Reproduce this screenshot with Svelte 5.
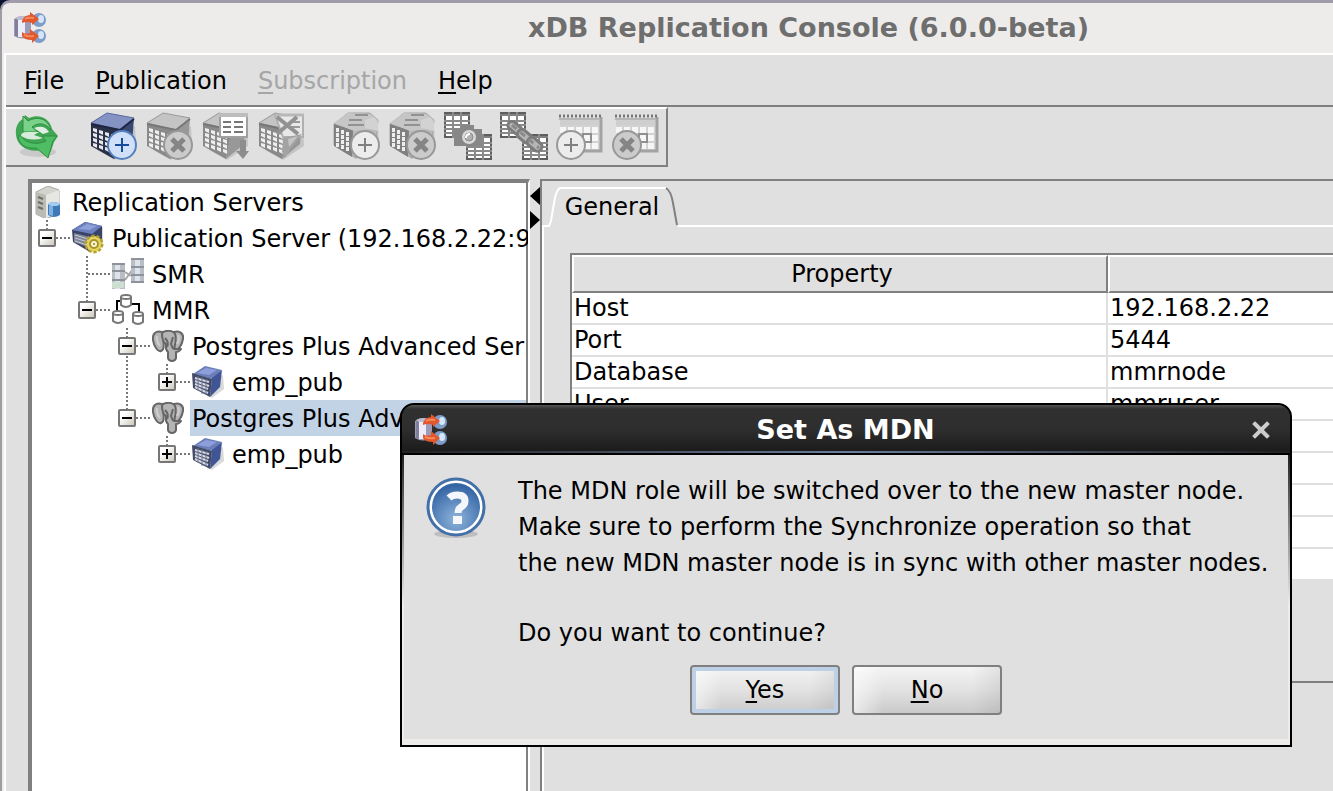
<script>
  const menus = [
    { key: 'F', rest: 'ile', off: false },
    { key: 'P', rest: 'ublication', off: false },
    { key: 'S', rest: 'ubscription', off: true },
    { key: 'H', rest: 'elp', off: false }
  ];

  const tree = [
    { label: 'Replication Servers', icon: 'root', cells: [] },
    { label: 'Publication Server (192.168.2.22:9', icon: 'pub', cells: ['minus-last'] },
    { label: 'SMR', icon: 'smr', cells: ['none', 'branch'] },
    { label: 'MMR', icon: 'mmr', cells: ['none', 'minus-last'] },
    { label: 'Postgres Plus Advanced Ser', icon: 'pg', cells: ['none', 'none', 'minus'] },
    { label: 'emp_pub', icon: 'table', cells: ['none', 'none', 'line', 'plus-last'] },
    { label: 'Postgres Plus Advanced Ser', icon: 'pg', cells: ['none', 'none', 'minus-last'], selected: true },
    { label: 'emp_pub', icon: 'table', cells: ['none', 'none', 'none', 'plus-last'] }
  ];

  const rows = [
    ['Host', '192.168.2.22'],
    ['Port', '5444'],
    ['Database', 'mmrnode'],
    ['User', 'mmruser'],
    ['', ''], ['', ''], ['', ''], ['', ''], ['', '']
  ];

  const tools = [
    [['refresh', 'Refresh', false]],
    [
      ['pubAdd', 'Add publication', false],
      ['pubRemove', 'Remove publication', true],
      ['pubTables', 'Add tables', true],
      ['pubFilter', 'Filter rules', true]
    ],
    [
      ['subAdd', 'Add subscription', true],
      ['subRemove', 'Remove subscription', true],
      ['snapshot', 'Snapshot', true],
      ['sync', 'Synchronize', true],
      ['calAdd', 'Configure schedule', true],
      ['calRemove', 'Remove schedule', true]
    ]
  ];
</script>

{#snippet appIcon()}
  <svg width="32" height="32" viewBox="0 0 32 32" aria-hidden="true">
    <path d="M0 7Q8 1 17 7V24Q8 29 0 24Z" fill="#9c9cb8" />
    <path d="M1 7H4V25L1 24Z" fill="#7f7f99" />
    <path d="M4 8H11V25H4Z" fill="#ececfa" />
    <path d="M1 6Q8 2 16 6L12 8H4Z" fill="#bcbcd0" />
    <circle cx="25" cy="8" r="7" fill="#7d9cc8" />
    <ellipse cx="27" cy="7" rx="3" ry="4" fill="#d4e6f8" />
    <circle cx="25" cy="24" r="7" fill="#7d9cc8" />
    <ellipse cx="27" cy="23" rx="3" ry="4" fill="#d4e6f8" />
    <path d="M8 9Q10 3 16 3V0L25 7L18 13V11Q12 9 8 11Z" fill="#e2582c" />
    <path d="M11 7Q14 5 20 6" fill="none" stroke="#f58a5c" stroke-width="2" />
    <path d="M8 20Q11 23 16 21V17L25 24L18 31V28Q10 28 8 24Z" fill="#e2582c" />
    <path d="M10 23Q14 25 20 24" fill="none" stroke="#f58a5c" stroke-width="2" />
  </svg>
{/snippet}

{#snippet box(blue)}
  <polygon points="8,38 26,48 47,34 46,14" fill="#000" opacity="0.12" />
  <polygon points="31,17 45,6 43,32 25,47" fill={blue ? '#3a4874' : '#989898'} />
  <polygon points="2,11 31,17 25,47 2,34" fill={blue ? '#2a3048' : '#8a8a8a'} />
  <g fill={blue ? '#e6e8ee' : '#eeeeee'}>
    {#each [0, 1, 2, 3] as r}
      {#each [0, 1, 2, 3] as c}
        <polygon points="{4 + c * 6},{16 + r * 5 + c * 2} {8 + c * 6},{17 + r * 5 + c * 2} {8 + c * 6},{21 + r * 5 + c * 2} {4 + c * 6},{19 + r * 5 + c * 2}" />
      {/each}
    {/each}
  </g>
  <polygon points="2,11 18,1 45,6 31,18" fill={blue ? '#8592c4' : '#c4c4c4'} stroke={blue ? '#59679c' : '#9a9a9a'} />
  <path d="M2 12L31 18L45 7" fill="none" stroke={blue ? '#1f2540' : '#777'} stroke-width="2" />
{/snippet}

{#snippet subBox()}
  <polygon points="8,38 24,47 47,34 46,14" fill="#000" opacity="0.12" />
  <polygon points="2,12 16,1 38,1 46,8 44,30 24,46 2,33" fill="#b9b9b9" stroke="#a5a5a5" />
  <polygon points="2,12 21,18 20,45 2,34" fill="#808080" />
  <g fill="#eee">
    {#each [0, 1, 2, 3] as r}
      {#each [0, 1, 2] as c}
        <rect x={4 + c * 5} y={16 + r * 5 + c * 2} width="3" height="4" />
      {/each}
    {/each}
  </g>
  <path d="M2 11L16 1L38 2L46 8L40 17L22 19Z" fill="#c6c6c6" />
  <path d="M17 8H30M16 13H32M23 3H36" stroke="#929292" stroke-width="2" />
  <path d="M33 16V8L42 5L46 10V19Z" fill="#d2d2d2" />
{/snippet}

{#snippet badge(x, kind, blue)}
  <circle cx={x} cy="33" r="14" fill={blue ? '#cfe0f8' : kind === 'x' ? '#cbcbcb' : '#ececec'} stroke={blue ? '#5580c0' : '#989898'} stroke-width="2" />
  {#if kind === 'x'}
    <path d="M{x - 6} 27L{x + 6} 39M{x + 6} 27L{x - 6} 39" stroke="#858585" stroke-width="5" />
  {:else}
    <path d="M{x - 7} 33H{x + 7}M{x} 26V40" stroke={blue ? '#164a9c' : '#808080'} stroke-width="2" />
  {/if}
{/snippet}

{#snippet sheet(x, y)}
  <rect x={x + 1} y={y + 1} width="24" height="24" fill="#fff" stroke="#5e5e5e" stroke-width="2" />
  <path d="M{x} {y + 3}H{x + 26}" stroke="#808080" stroke-width="2" />
  <path d="M{x} {y + 9}H{x + 26}M{x} {y + 13}H{x + 26}M{x} {y + 17}H{x + 26}M{x} {y + 21}H{x + 26}M{x + 9} {y}V{y + 26}M{x + 17} {y}V{y + 26}" stroke="#8a8a8a" stroke-width="2" />
{/snippet}

{#snippet calendar()}
  <rect x="4" y="6" width="41" height="34" fill="#d2d2d2" />
  <path d="M45 5V39H6" fill="none" stroke="#a3a3a3" stroke-width="3" />
  <path d="M3 4H46" stroke="#777" stroke-width="3" stroke-dasharray="2 2" />
  <path d="M3 7H44" stroke="#b5b5b5" stroke-width="2" />
  <rect x="4" y="8" width="39" height="5" fill="#cfcfcf" />
  <g fill="#f6f6f6">
    {#each [0, 1, 2] as r}
      {#each [0, 1, 2, 3, 4] as c}
        <rect x={4 + c * 8} y={15 + r * 8} width="6" height="6" />
      {/each}
    {/each}
  </g>
  <rect x="27" y="22" width="8" height="8" fill="none" stroke="#8f8f8f" stroke-width="2" />
{/snippet}

{#snippet toolIcon(name)}
  <svg width="48" height="48" viewBox="0 0 48 48" aria-hidden="true">
    {#if name === 'refresh'}
      <ellipse cx="24" cy="40" rx="18" ry="5" fill="#000" opacity="0.1" />
      <path d="M2 23C1 14 5 9 9 7L11 3L15 6C26 1 36 7 38 17L44 24L40 30L38 36L34 46L28 38C14 41 3 34 2 23Z" fill="#41a653" />
      <path d="M9 4V20H24L18 15C24 10 32 11 37 18C34 6 23 4 14 9Z" fill="#7ad18a" stroke="#2f8f42" />
      <path d="M4 24C5 33 12 37 22 36L27 40L34 46L39 29L43 24H28L32 29C24 33 12 32 7 24Z" fill="#4fbd63" stroke="#2f8f42" />
      <path d="M7 24Q7 20 13 20H25L20 23L29 26Q17 30 7 24Z" fill="#d9ecdb" />
      <path d="M20 16Q30 12 35 20L29 22Z" fill="#e1efe2" />
    {:else if name === 'pubAdd'}
      {@render box(true)}{@render badge(33, '+', true)}
    {:else if name === 'pubRemove'}
      {@render box(false)}{@render badge(33, 'x', false)}
    {:else if name === 'pubTables'}
      {@render box(false)}
      <path d="M19 3H46V25H19Z" fill="#fff" stroke="#a0a0a0" stroke-width="2" />
      <path d="M18 3H47" stroke="#bdbdbd" stroke-width="4" />
      <path d="M22 10H30M33 10H42M22 15H30M33 15H42M22 20H30M33 20H42" stroke="#777" stroke-width="2" />
      <path d="M39 28H45V39H48L42 47L35 39H39Z" fill="#8d8d8d" />
    {:else if name === 'pubFilter'}
      {@render box(false)}
      <path d="M18 3H46V25H26Z" fill="#e8e8e8" stroke="#b0b0b0" stroke-width="2" />
      <path d="M18 3H47" stroke="#b8b8b8" stroke-width="3" />
      <path d="M34 10H43M34 15H43" stroke="#999" stroke-width="2" />
      <path d="M20 5L41 22M40 5L20 22" stroke="#929292" stroke-width="4" />
      <path d="M26 26L45 22L34 36L28 46L25 40Z" fill="#a3a3a3" />
      <path d="M31 27L41 24L32 35Z" fill="#c4c4c4" />
    {:else if name === 'subAdd'}
      {@render subBox()}{@render badge(33, '+', false)}
    {:else if name === 'subRemove'}
      {@render subBox()}{@render badge(33, 'x', false)}
    {:else if name === 'snapshot'}
      {@render sheet(0, 0)}{@render sheet(22, 22)}
      <path d="M10 17H17V13H30V17H38V34H10Z" fill="#878787" />
      <circle cx="25" cy="25" r="7" fill="#d9d9d9" />
      <circle cx="25" cy="25" r="4" fill="#b0b0b0" stroke="#8a8a8a" />
      <path d="M22 26Q22 22 26 22" fill="none" stroke="#fff" stroke-width="2" />
    {:else if name === 'sync'}
      {@render sheet(0, 0)}{@render sheet(22, 22)}
      <g fill="#b5b5b5" stroke="#7c7c7c" stroke-width="3">
        <rect x="7" y="12" width="16" height="8" rx="4" transform="rotate(40 15 16)" />
        <rect x="17" y="20" width="16" height="9" rx="4" transform="rotate(40 25 24)" />
        <rect x="27" y="28" width="16" height="9" rx="4" transform="rotate(40 35 32)" />
      </g>
      <path d="M12 13L39 36" stroke="#8a8a8a" stroke-width="3" stroke-dasharray="6 5" />
    {:else if name === 'calAdd'}
      {@render calendar()}{@render badge(15, '+', false)}
    {:else}
      {@render calendar()}{@render badge(15, 'x', false)}
    {/if}
  </svg>
{/snippet}

{#snippet treeIcon(name)}
  <svg width="32" height="32" viewBox="0 0 32 32" aria-hidden="true">
    {#if name === 'root'}
      <path d="M4 6L16 0L27 4V27L14 33L4 28Z" fill="#d2d4ce" stroke="#a4a69f" />
      <path d="M4 6L14 9V32L4 28Z" fill="#b9bbb4" />
      <path d="M14 9L27 4V27L14 32Z" fill="#e6e7e3" />
      <path d="M6 11L11 13M6 16L11 18M6 21L11 23" stroke="#6c6e69" stroke-width="2" />
      <path d="M16 18Q22 14 28 18V29Q22 33 16 29Z" fill="#3f79b8" />
      <path d="M17 20H21V30L17 29Z" fill="#7fb0e2" />
      <ellipse cx="22" cy="18" rx="6" ry="2" fill="#a5cbef" />
    {:else if name === 'pub'}
      <path d="M20 12L31 5V25L18 31Z" fill="#000" opacity="0.15" />
      <path d="M0 8L13 0L30 4V22L18 30L1 20Z" fill="#3a4468" />
      <path d="M0 8L14 0L30 4L20 12Z" fill="#6d80c0" />
      <path d="M6 7L15 2L25 4L18 8Z" fill="#8ea0d8" />
      <path d="M2 11L18 15V26L2 20Z" fill="#7f8596" />
      <path d="M3 13L16 17M3 16L16 20M3 19L15 23" stroke="#c9ccd6" />
      <circle cx="22" cy="22" r="8" fill="#e5d254" stroke="#b5a02c" stroke-width="3" stroke-dasharray="3 2" />
      <circle cx="22" cy="22" r="7" fill="#e6d462" />
      <circle cx="22" cy="22" r="4" fill="#faf4cf" stroke="#a8952c" stroke-width="2" />
      <circle cx="22" cy="22" r="1" fill="#92821f" />
    {:else if name === 'smr'}
      <path d="M13 22L21 11M13 14L19 18" stroke="#a5a5a5" stroke-width="2" />
      <rect x="0" y="5" width="13" height="26" fill="#b9bec6" />
      <rect x="19" y="0" width="13" height="25" fill="#b9bec6" />
      <path d="M3 5H8V31H3ZM23 0H28V25H23Z" fill="#dfe4ea" />
      <path d="M0 6H13M0 13H13M0 22H13M19 1H32M19 9H32M19 17H32M19 24H32" stroke="#8d929b" stroke-width="2" />
      <path d="M0 24H12V30H0Z" fill="#cddfd2" />
    {:else if name === 'mmr'}
      <path d="M5 17V7H9M19 10H27V18" fill="none" stroke="#000" stroke-width="2" />
      <g fill="#fff" stroke="#777" stroke-width="2">
        <path d="M9 3V11Q14 15 19 11V3" /><ellipse cx="14" cy="3" rx="5" ry="2" />
        <path d="M1 19V27Q6 31 11 27V19" /><ellipse cx="6" cy="19" rx="5" ry="2" />
        <path d="M21 20V28Q26 32 31 28V20" /><ellipse cx="26" cy="20" rx="5" ry="2" />
      </g>
    {:else if name === 'pg'}
      <g fill="#b4b4b4" stroke="#666" stroke-width="2" stroke-linejoin="round">
        <path d="M10 2C4 0 0 4 1 10C2 17 6 22 9 21C12 20 12 14 11 9Z" />
        <path d="M22 2C28 0 32 4 31 9C30 15 26 21 23 20L20 9Z" />
        <path d="M10 3C13 0 21 0 23 4C25 9 23 14 22 19H29Q27 22 24 22V28C23 32 17 32 16 28V22C13 20 14 16 14 14C10 12 10 7 10 3Z" />
      </g>
      <path d="M13 8C15 10 17 13 15 17M21 7L19 14L21 19" fill="none" stroke="#666" stroke-width="2" />
      <path d="M5 6Q4 11 8 16M26 5Q28 9 25 14" fill="none" stroke="#cfcfcf" stroke-width="2" />
    {:else}
      <path d="M7 24L20 32L32 23L31 9Z" fill="#000" opacity="0.15" />
      <path d="M1 8L13 0L30 4L20 13Z" fill="#6b7fbd" />
      <path d="M5 7L14 2L25 4L17 9Z" fill="#8d9fd8" />
      <path d="M20 12L30 4L28 21L18 31Z" fill="#3f5596" />
      <path d="M0 7L20 13L18 31L1 22Z" fill="#434a66" />
      <path d="M3 12L17 16M3 15L17 20M3 18L16 23M3 21L16 27" stroke="#d7dae6" stroke-width="2" />
      <path d="M6 10V25M10 11V28M14 13V29" stroke="#6c738c" />
    {/if}
  </svg>
{/snippet}

{#snippet guides(kind)}
  <svg width="40" height="36" viewBox="0 0 40 36" aria-hidden="true">
    <g stroke="#777" stroke-width="2" stroke-dasharray="2 2">
      {#if kind !== 'none'}
        <path d="M15 0V{kind.endsWith('last') ? 18 : 36}" />
      {/if}
      {#if kind !== 'none' && kind !== 'line'}
        <path d="M16 18H38" />
      {/if}
    </g>
    {#if kind.startsWith('minus') || kind.startsWith('plus')}
      <rect x="7" y="10" width="16" height="16" rx="1" fill="url(#handle)" stroke="#777" stroke-width="2" />
      <path d="M10 18H20" stroke="#000" stroke-width="2" />
      {#if kind.startsWith('plus')}
        <path d="M15 13V23" stroke="#000" stroke-width="2" />
      {/if}
    {/if}
  </svg>
{/snippet}

<svg class="defs" aria-hidden="true">
  <linearGradient id="handle" x1="0" y1="0" x2="1" y2="1">
    <stop offset="0.3" stop-color="#fff" />
    <stop offset="1" stop-color="#c9c4b6" />
  </linearGradient>
</svg>

<div class="desktop">
  <main class="window">
    <header class="titlebar">
      {@render appIcon()}
      <h1>xDB Replication Console (6.0.0-beta)</h1>
    </header>

    <div class="client">
      <nav class="menubar">
        {#each menus as m}
          <button disabled={m.off}><u>{m.key}</u>{m.rest}</button>
        {/each}
      </nav>

      <div class="toolbar">
        {#each tools as group}
          <div class="group">
            {#each group as [name, label, off]}
              <button aria-label={label} disabled={off}>{@render toolIcon(name)}</button>
            {/each}
          </div>
        {/each}
      </div>

      <div class="split">
        <ul class="tree">
          {#each tree as node}
            <li>
              {#each node.cells as kind}
                {#if kind.startsWith('minus') || kind.startsWith('plus')}
                  <button class="cell" aria-label={kind.startsWith('minus') ? 'Collapse' : 'Expand'}>{@render guides(kind)}</button>
                {:else}
                  <span class="cell">{@render guides(kind)}</span>
                {/if}
              {/each}
              {@render treeIcon(node.icon)}
              <span class="label" class:selected={node.selected}>{node.label}</span>
            </li>
          {/each}
        </ul>

        <div class="divider">
          <button aria-label="Collapse left pane"><svg width="10" height="18" viewBox="0 0 10 18"><path d="M10 0V18L0 9Z" /></svg></button>
          <button aria-label="Expand left pane"><svg width="10" height="18" viewBox="0 0 10 18"><path d="M0 0V18L10 9Z" /></svg></button>
        </div>

        <section class="details">
          <div class="tabs">
            <button class="tab">
              <svg width="138" height="40" viewBox="0 0 138 40" aria-hidden="true">
                <path d="M0 39H7L9 34L12 16Q14 3 18 1H124" fill="none" stroke="#fff" stroke-width="2" />
                <path d="M124 1Q129 4 131 16L135 38" fill="none" stroke="#808080" stroke-width="2" />
              </svg>
              <span>General</span>
            </button>
          </div>
          <div class="page">
            <div class="scroll">
              <table>
                <thead>
                  <tr><th>Property</th><th></th></tr>
                </thead>
                <tbody>
                  {#each rows as [name, value]}
                    <tr><td>{name}</td><td>{value}</td></tr>
                  {/each}
                </tbody>
              </table>
            </div>
          </div>
        </section>
      </div>
    </div>
  </main>

  <div class="dialog" role="dialog" aria-labelledby="dialog-title">
    <header>
      {@render appIcon()}
      <h2 id="dialog-title">Set As MDN</h2>
      <button class="close" aria-label="Close">
        <svg width="18" height="18" viewBox="0 0 18 18"><path d="M3 3L15 15M15 3L3 15" stroke="#ccc" stroke-width="4" stroke-linecap="square" /></svg>
      </button>
    </header>
    <div class="body">
      <div class="message">
        <svg width="64" height="64" viewBox="0 0 64 64" aria-hidden="true">
          <defs>
            <radialGradient id="ask" cx="0.5" cy="0.75" r="0.7">
              <stop offset="0" stop-color="#8fb4dc" />
              <stop offset="1" stop-color="#3465a4" />
            </radialGradient>
          </defs>
          <ellipse cx="32" cy="58" rx="22" ry="4" fill="#000" opacity="0.15" />
          <circle cx="32" cy="31" r="28" fill="#fff" stroke="#4470a8" stroke-width="3" />
          <circle cx="32" cy="31" r="24" fill="url(#ask)" />
          <path d="M25 22Q28 19 33 19Q41 19 41 25Q41 29 37 31Q34 33 34 37" fill="none" stroke="#f4f8fc" stroke-width="7" />
          <rect x="29" y="40" width="9" height="8" fill="#f4f8fc" />
        </svg>
        <div class="text">
          <p>The MDN role will be switched over to the new master node.<br />Make sure to perform the Synchronize operation so that<br />the new MDN master node is in sync with other master nodes.</p>
          <p>Do you want to continue?</p>
        </div>
      </div>
      <div class="actions">
        <button class="default"><u>Y</u>es</button>
        <button><u>N</u>o</button>
      </div>
    </div>
  </div>
</div>

<style>
  :global(body) {
    margin: 0;
    overflow: hidden;
  }
  .desktop {
    position: relative;
    height: 100vh;
    overflow: hidden;
    background: #0b1230;
    font: 24px 'DejaVu Sans', sans-serif;
    color: #000;
  }
  .desktop :global(svg) {
    display: block;
    flex: none;
  }
  .defs {
    position: absolute;
    width: 0;
    height: 0;
  }
  button {
    margin: 0;
    padding: 0;
    border: 0;
    background: none;
    font: inherit;
    color: inherit;
  }
  u {
    text-decoration-thickness: 2px;
    text-underline-offset: 3px;
  }
  h1,
  h2,
  p {
    margin: 0;
  }
  .window {
    box-sizing: border-box;
    display: flex;
    flex-direction: column;
    height: 100%;
    border-top: 3px solid #a09cab;
    border-left: 2px solid #a09ca3;
    border-radius: 10px 0 0 0;
    background: #edeceb;
  }
  .titlebar {
    display: flex;
    align-items: center;
    height: 50px;
    padding-left: 12px;
  }
  h1 {
    flex: 1;
    padding-left: 238px;
    box-sizing: border-box;
    text-align: center;
    font-size: 27px;
    line-height: 50px;
    color: #6e6e6e;
    white-space: nowrap;
  }
  .client {
    flex: 1;
    display: flex;
    flex-direction: column;
    min-height: 0;
    margin-left: 2px;
    border-top: 2px solid #fff;
    border-left: 2px solid #fff;
    background: #e0e0e0;
  }
  .menubar {
    display: flex;
    gap: 31px;
    height: 50px;
    padding-left: 18px;
    border-bottom: 2px solid #808080;
  }
  .menubar button {
    padding-top: 2px;
  }
  .menubar button:disabled {
    color: #a6a6a6;
  }
  .toolbar {
    display: flex;
    gap: 27px;
    align-self: flex-start;
    padding: 3px 6px 5px 8px;
    border: 2px solid #808080;
    border-top-color: #fff;
    border-left: 0;
  }
  .group {
    display: flex;
    gap: 8px;
  }
  .split {
    flex: 1;
    display: flex;
    min-height: 0;
    padding: 12px 0 0 22px;
  }
  .tree {
    flex: none;
    box-sizing: border-box;
    width: 502px;
    margin: 0;
    padding: 1px 0 0;
    overflow: hidden;
    list-style: none;
    background: #fff;
    background-clip: padding-box;
    border: 4px solid #808080;
    border-right: 2px solid #fff;
    border-bottom: 0;
    box-shadow: inset -2px 0 #808080;
  }
  .tree li {
    display: flex;
    align-items: center;
    height: 36px;
    margin-right: 2px;
    white-space: nowrap;
  }
  .cell {
    flex: none;
    width: 40px;
    height: 36px;
  }
  .label {
    flex: none;
    box-sizing: border-box;
    height: 36px;
    margin-left: 6px;
    padding: 0 2px;
    line-height: 38px;
  }
  .selected {
    flex: 1;
    background: #c3d3e6;
  }
  .divider {
    flex: none;
    display: flex;
    flex-direction: column;
    gap: 6px;
    width: 10px;
    padding-top: 8px;
  }
  .divider button {
    height: 18px;
  }
  .details {
    flex: 1;
    min-width: 0;
    display: flex;
    flex-direction: column;
    border-top: 2px solid #808080;
    border-left: 2px solid #808080;
  }
  .tabs {
    display: flex;
    padding-top: 6px;
  }
  .tabs::after {
    content: '';
    flex: 1;
    border-bottom: 2px solid #fff;
  }
  .tab {
    display: grid;
    width: 136px;
  }
  .tab svg,
  .tab span {
    grid-area: 1 / 1;
  }
  .tab span {
    line-height: 40px;
    padding-left: 2px;
  }
  .page {
    flex: 1;
    padding: 26px 0 0 26px;
    border-left: 2px solid #fff;
    overflow: hidden;
  }
  .scroll {
    height: 426px;
    border: 2px solid #808080;
    border-right: 0;
    overflow: hidden;
  }
  table {
    width: 1072px;
    table-layout: fixed;
    border-collapse: separate;
    border-spacing: 0;
    background: #fff;
  }
  th {
    height: 34px;
    padding: 0 0 0 4px;
    line-height: 34px;
    font-weight: normal;
    background: #e0e0e0;
    border-top: 2px solid #fff;
    border-left: 2px solid #fff;
    border-right: 2px solid #808080;
    border-bottom: 2px solid #808080;
  }
  td {
    height: 30px;
    padding: 0 2px;
    line-height: 30px;
    border-right: 2px solid #e0e0e0;
    border-bottom: 2px solid #e0e0e0;
  }
  .dialog {
    position: absolute;
    left: 400px;
    top: 403px;
    box-sizing: border-box;
    width: 892px;
    border: 2px solid #000;
    border-radius: 14px 14px 0 0;
    background: linear-gradient(#222 50px, #777 110px, #edeceb 200px);
    overflow: hidden;
  }
  .dialog header {
    display: flex;
    align-items: center;
    height: 46px;
    padding: 2px 20px 0 13px;
    background:
      linear-gradient(90deg, #222, #6a7d9c 50%, #222) bottom / 100% 2px no-repeat,
      linear-gradient(#555, #303030 4px, #2e2e2e 24px, #1a1a1a);
    border-bottom: 2px solid #000;
  }
  h2 {
    flex: 1;
    padding-right: 8px;
    font-size: 27px;
    line-height: 44px;
    text-align: center;
    color: #fff;
  }
  .body {
    margin: 0 2px 6px;
    padding: 18px 20px 24px;
    background: #e0e0e0;
  }
  .message {
    display: flex;
    gap: 30px;
  }
  .message > svg {
    margin-top: 3px;
  }
  .text p {
    line-height: 36px;
    white-space: nowrap;
  }
  .text p + p {
    margin-top: 34px;
  }
  .actions {
    display: flex;
    justify-content: center;
    gap: 12px;
    margin-top: 14px;
  }
  .actions button {
    width: 150px;
    height: 50px;
    border: 2px solid #808080;
    border-radius: 4px;
    background: linear-gradient(90deg, #fff9, #fff0 20%, #0000 80%, #0001), linear-gradient(#f4f4f4, #e2e2e2 50%, #cacaca);
  }
  .actions .default {
    box-shadow: inset 0 0 0 4px #bdd0e6;
  }
</style>
